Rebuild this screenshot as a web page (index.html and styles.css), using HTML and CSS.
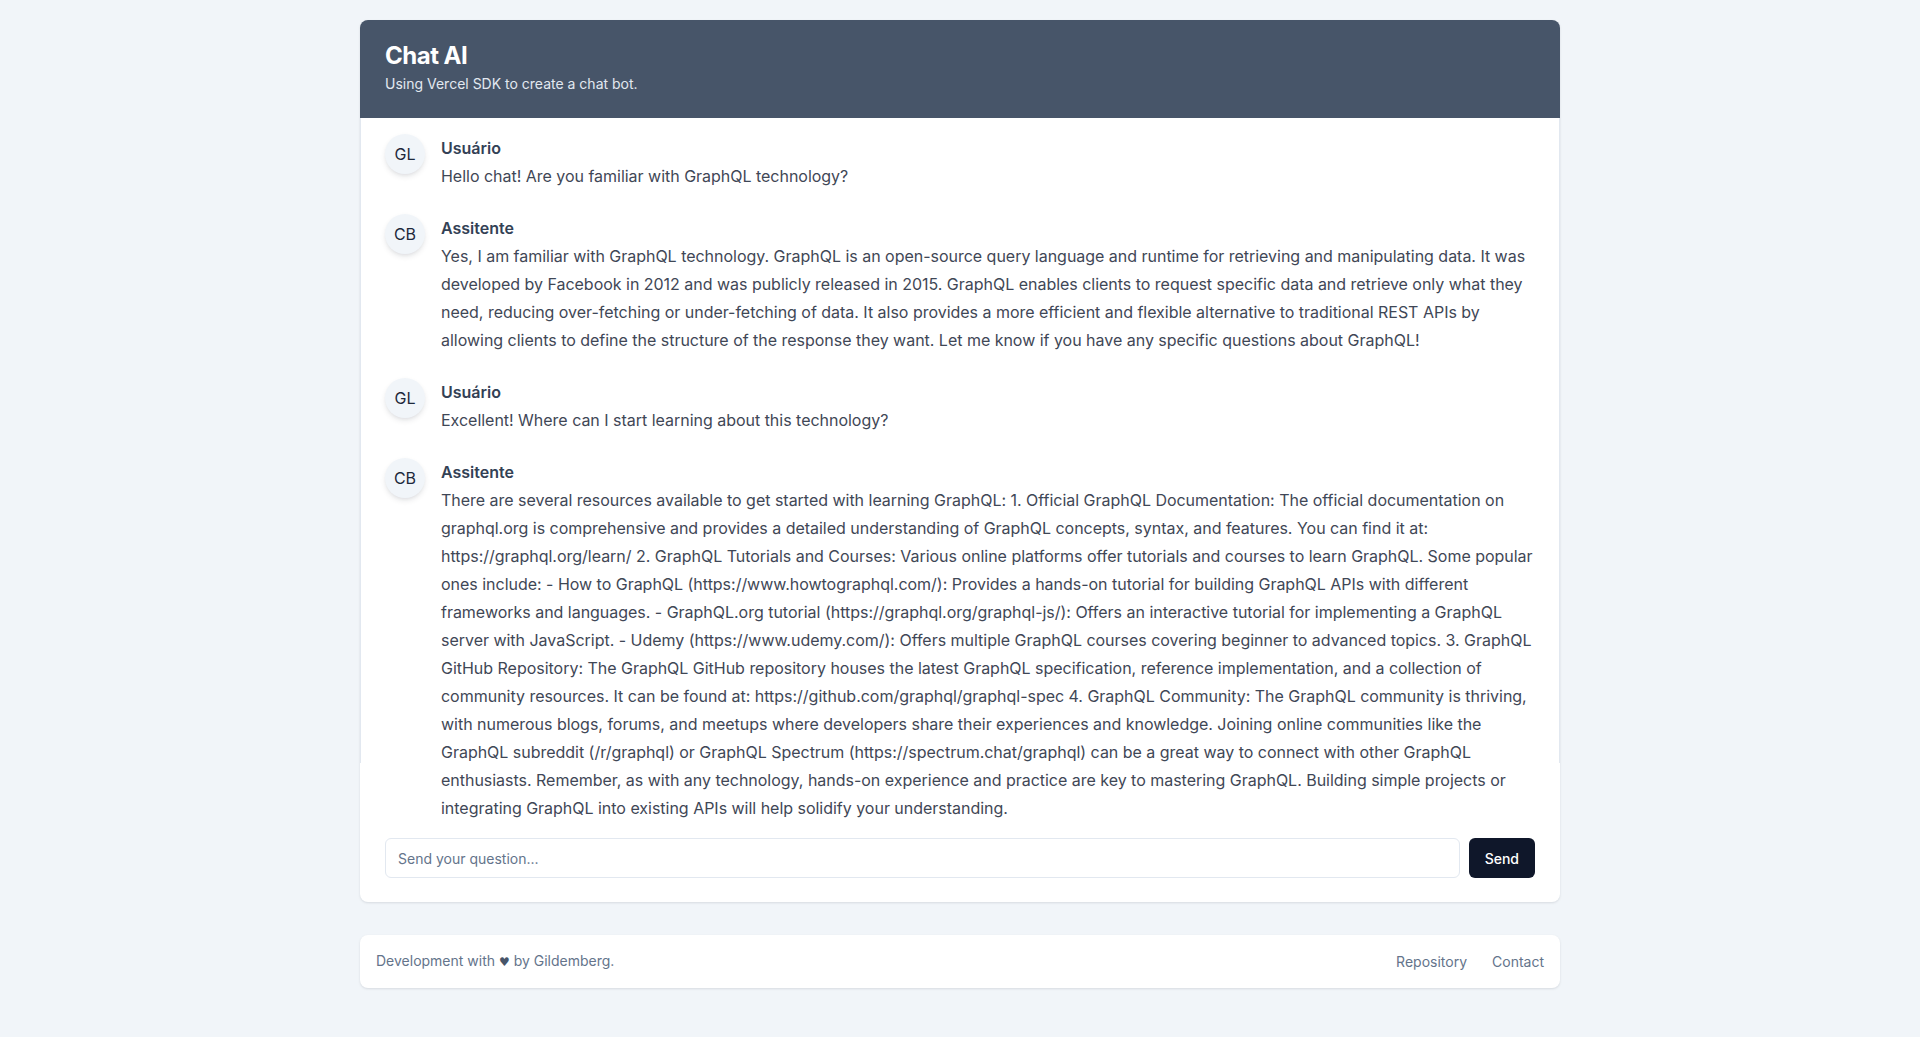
FILE: index.html
```html
<!DOCTYPE html>
<html lang="en">
<head>
<meta charset="utf-8">
<title>Chat AI</title>
<link rel="stylesheet" href="styles.css">
</head>
<body>
<main class="page">
  <section class="card">
    <header class="card-header">
      <h1 class="card-title">Chat AI</h1>
      <p class="card-desc">Using Vercel SDK to create a chat bot.</p>
    </header>
    <div class="messages">
      <div class="msg">
        <div class="avatar">GL</div>
        <div class="msg-body">
          <div class="msg-name">Usuário</div>
          <p class="msg-text">Hello chat! Are you familiar with GraphQL technology?</p>
        </div>
      </div>
      <div class="msg">
        <div class="avatar">CB</div>
        <div class="msg-body">
          <div class="msg-name">Assitente</div>
          <p class="msg-text">Yes, I am familiar with GraphQL technology. GraphQL is an open-source query language and runtime for retrieving and manipulating data. It was developed by Facebook in 2012 and was publicly released in 2015. GraphQL enables clients to request specific data and retrieve only what they need, reducing over-fetching or under-fetching of data. It also provides a more efficient and flexible alternative to traditional REST APIs by allowing clients to define the structure of the response they want. Let me know if you have any specific questions about GraphQL!</p>
        </div>
      </div>
      <div class="msg">
        <div class="avatar">GL</div>
        <div class="msg-body">
          <div class="msg-name">Usuário</div>
          <p class="msg-text">Excellent! Where can I start learning about this technology?</p>
        </div>
      </div>
      <div class="msg">
        <div class="avatar">CB</div>
        <div class="msg-body">
          <div class="msg-name">Assitente</div>
          <p class="msg-text">There are several resources available to get started with learning GraphQL: 1. Official GraphQL Documentation: The official documentation on graphql.org is comprehensive and provides a detailed understanding of GraphQL concepts, syntax, and features. You can find it at: https://graphql.org/learn/ 2. GraphQL Tutorials and Courses: Various online platforms offer tutorials and courses to learn GraphQL. Some popular ones include: - How to GraphQL (https://www.howtographql.com/): Provides a hands-on tutorial for building GraphQL APIs with different frameworks and languages. - GraphQL.org tutorial (https://graphql.org/graphql-js/): Offers an interactive tutorial for implementing a GraphQL server with JavaScript. - Udemy (https://www.udemy.com/): Offers multiple GraphQL courses covering beginner to advanced topics. 3. GraphQL GitHub Repository: The GraphQL GitHub repository houses the latest GraphQL specification, reference implementation, and a collection of community resources. It can be found at: https://github.com/graphql/graphql-spec 4. GraphQL Community: The GraphQL community is thriving, with numerous blogs, forums, and meetups where developers share their experiences and knowledge. Joining online communities like the GraphQL subreddit (/r/graphql) or GraphQL Spectrum (https://spectrum.chat/graphql) can be a great way to connect with other GraphQL enthusiasts. Remember, as with any technology, hands-on experience and practice are key to mastering GraphQL. Building simple projects or integrating GraphQL into existing APIs will help solidify your understanding.</p>
        </div>
      </div>
    </div>
    <form class="composer">
      <input class="composer-input" type="text" placeholder="Send your question...">
      <button class="composer-btn" type="button">Send</button>
    </form>
  </section>
  <footer class="site-footer">
    <span class="footer-text">Development with <span class="heart">♥</span> by Gildemberg.</span>
    <nav class="footer-links">
      <a class="footer-link" href="#">Repository</a>
      <a class="footer-link" href="#">Contact</a>
    </nav>
  </footer>
</main>
</body>
</html>
```

FILE: styles.css
```css
* {
  box-sizing: border-box;
}

html, body {
  margin: 0;
  padding: 0;
}

body {
  background: #f1f5f9;
  font-family: Inter, "Noto Sans", "Liberation Sans", sans-serif;
  color: #334155;
}

.page {
  width: 1200px;
  margin: 0 auto;
  padding: 20px 0 50px;
}

.card {
  position: relative;
  background: #ffffff;
  border-radius: 8px;
  box-shadow: 0 1px 3px rgba(15, 23, 42, 0.08), 0 1px 2px rgba(15, 23, 42, 0.04);
}

.card::before {
  content: "";
  position: absolute;
  top: 0;
  left: 0;
  right: 0;
  height: 742px;
  border: 1px solid #e2e8f0;
  border-bottom: 0;
  border-radius: 8px 8px 0 0;
  pointer-events: none;
}

.card-header {
  position: relative;
  z-index: 1;
  background: #475569;
  border-radius: 8px 8px 0 0;
  padding: 24px 25px 24px;
  display: flex;
  flex-direction: column;
  gap: 6px;
}

.card-title {
  margin: 0;
  font-size: 24px;
  line-height: 24px;
  font-weight: 700;
  letter-spacing: -0.5px;
  color: #ffffff;
}

.card-desc {
  margin: 0;
  font-size: 14px;
  line-height: 20px;
  color: #e2e8f0;
}

.messages {
  padding: 16px 22px 0 25px;
  display: flex;
  flex-direction: column;
  gap: 24px;
}

.msg {
  display: flex;
  align-items: flex-start;
  gap: 16px;
}

.avatar {
  flex: 0 0 40px;
  width: 40px;
  height: 40px;
  border-radius: 50%;
  background: #f1f5f9;
  box-shadow: 0 3px 6px -1px rgba(15, 23, 42, 0.12), 0 2px 4px -2px rgba(15, 23, 42, 0.08);
  display: flex;
  align-items: center;
  justify-content: center;
  font-size: 16px;
  color: #1e293b;
}

.msg-body {
  flex: 1;
  min-width: 0;
}

.msg-name {
  font-size: 16px;
  line-height: 28px;
  font-weight: 600;
  color: #334155;
}

.msg-text {
  margin: 0;
  font-size: 16px;
  line-height: 28px;
  letter-spacing: -0.02px;
  color: #3f4756;
}

.composer {
  margin: 0;
  padding: 16px 25px 24px;
  display: flex;
  gap: 9px;
}

.composer-input {
  flex: 1;
  height: 40px;
  border: 1px solid #e2e8f0;
  border-radius: 6px;
  padding: 0 12px;
  font-family: inherit;
  font-size: 14px;
  color: #0f172a;
  background: #ffffff;
  outline: none;
}

.composer-input::placeholder {
  color: #64748b;
}

.composer-btn {
  height: 40px;
  padding: 0 16px;
  border: 0;
  border-radius: 6px;
  background: #0f172a;
  color: #ffffff;
  font-family: inherit;
  font-size: 14px;
  font-weight: 500;
}

.site-footer {
  margin-top: 33px;
  background: #ffffff;
  border-radius: 8px;
  box-shadow: 0 1px 3px rgba(15, 23, 42, 0.08), 0 1px 2px rgba(15, 23, 42, 0.04);
  padding: 16px;
  display: flex;
  align-items: center;
  justify-content: space-between;
  font-size: 14px;
  line-height: 20px;
  color: #64748b;
}

.heart {
  font-family: "DejaVu Sans", sans-serif;
  font-size: 12px;
  color: #475569;
}

.footer-links {
  display: flex;
  gap: 25px;
}

.footer-link {
  color: #64748b;
  text-decoration: none;
}
```
